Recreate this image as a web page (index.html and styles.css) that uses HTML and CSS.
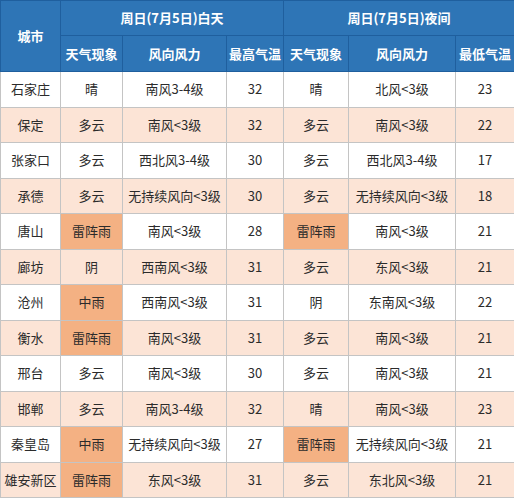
FILE: index.html
```html
<!DOCTYPE html>
<html lang="zh-CN">
<head>
<meta charset="utf-8">
<title>河北天气预报</title>
<link rel="stylesheet" href="styles.css">
</head>
<body>
<table class="wx">
  <colgroup>
    <col class="c-city"><col class="c-w1"><col class="c-d1"><col class="c-t1"><col class="c-w2"><col class="c-d2"><col class="c-t2">
  </colgroup>
  <thead>
    <tr class="h1">
      <th rowspan="2">城市</th>
      <th colspan="3">周日(7月5日)白天</th>
      <th colspan="3">周日(7月5日)夜间</th>
    </tr>
    <tr class="h2">
      <th>天气现象</th><th>风向风力</th><th>最高气温</th>
      <th>天气现象</th><th>风向风力</th><th>最低气温</th>
    </tr>
  </thead>
  <tbody>
    <tr><td>石家庄</td><td>晴</td><td>南风3-4级</td><td>32</td><td>晴</td><td>北风&lt;3级</td><td>23</td></tr>
    <tr><td>保定</td><td>多云</td><td>南风&lt;3级</td><td>32</td><td>多云</td><td>南风&lt;3级</td><td>22</td></tr>
    <tr><td>张家口</td><td>多云</td><td>西北风3-4级</td><td>30</td><td>多云</td><td>西北风3-4级</td><td>17</td></tr>
    <tr><td>承德</td><td>多云</td><td>无持续风向&lt;3级</td><td>30</td><td>多云</td><td>无持续风向&lt;3级</td><td>18</td></tr>
    <tr><td>唐山</td><td class="rain">雷阵雨</td><td>南风&lt;3级</td><td>28</td><td class="rain">雷阵雨</td><td>南风&lt;3级</td><td>21</td></tr>
    <tr><td>廊坊</td><td>阴</td><td>西南风&lt;3级</td><td>31</td><td>多云</td><td>东风&lt;3级</td><td>21</td></tr>
    <tr><td>沧州</td><td class="rain">中雨</td><td>西南风&lt;3级</td><td>31</td><td>阴</td><td>东南风&lt;3级</td><td>22</td></tr>
    <tr><td>衡水</td><td class="rain">雷阵雨</td><td>南风&lt;3级</td><td>31</td><td>多云</td><td>南风&lt;3级</td><td>21</td></tr>
    <tr><td>邢台</td><td>多云</td><td>南风&lt;3级</td><td>30</td><td>多云</td><td>南风&lt;3级</td><td>21</td></tr>
    <tr><td>邯郸</td><td>多云</td><td>南风3-4级</td><td>32</td><td>晴</td><td>南风&lt;3级</td><td>23</td></tr>
    <tr><td>秦皇岛</td><td class="rain">中雨</td><td>无持续风向&lt;3级</td><td>27</td><td class="rain">雷阵雨</td><td>无持续风向&lt;3级</td><td>21</td></tr>
    <tr><td>雄安新区</td><td class="rain">雷阵雨</td><td>东风&lt;3级</td><td>31</td><td>多云</td><td>东北风&lt;3级</td><td>21</td></tr>
  </tbody>
</table>
</body>
</html>
```
FILE: styles.css
```css
html, body {
  margin: 0;
  padding: 0;
  background: #ffffff;
}
body {
  width: 514px;
  height: 500px;
  overflow: hidden;
  font-family: "Noto Sans CJK SC", "Noto Sans", sans-serif;
  font-size: 13px;
  color: #2b2b2b;
}
.wx {
  width: 514px;
  border-collapse: collapse;
  table-layout: fixed;
}
.c-city { width: 60px; }
.c-w1 { width: 62px; }
.c-d1 { width: 104px; }
.c-t1 { width: 57px; }
.c-w2 { width: 65px; }
.c-d2 { width: 107px; }
.c-t2 { width: 59px; }

.wx th {
  background: #2e75b6;
  color: #ffffff;
  font-weight: bold;
  border: 1px solid #1f5f9e;
  padding: 0;
  text-align: center;
  white-space: nowrap;
  line-height: 16px;
}
.h1 { height: 35px; }
.h2 { height: 36px; }

.wx tbody tr { height: 35.5px; }
.wx td {
  border: 1px solid #c4c4c4;
  padding: 0;
  text-align: center;
  white-space: nowrap;
  line-height: 16px;
}
.wx tbody tr:nth-child(even) td { background: #fce4d6; }
.wx tbody tr td.rain { background: #f4b183; }
```
